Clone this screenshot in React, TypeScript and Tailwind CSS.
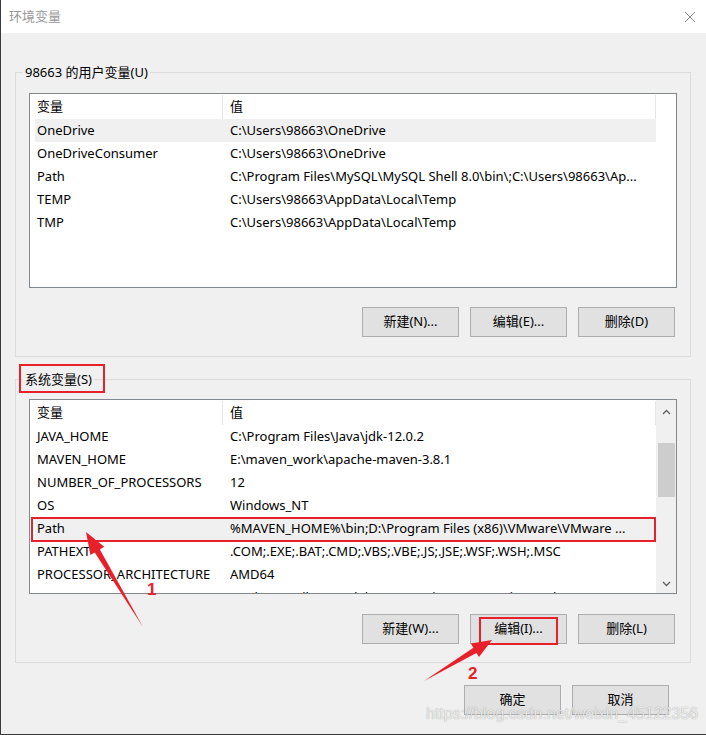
import React from 'react';

const font = { fontFamily: '"Noto Sans", "Noto Sans CJK SC", sans-serif' };

const userVars: [string, string][] = [
  ['OneDrive', 'C:\\Users\\98663\\OneDrive'],
  ['OneDriveConsumer', 'C:\\Users\\98663\\OneDrive'],
  ['Path', 'C:\\Program Files\\MySQL\\MySQL Shell 8.0\\bin\\;C:\\Users\\98663\\Ap...'],
  ['TEMP', 'C:\\Users\\98663\\AppData\\Local\\Temp'],
  ['TMP', 'C:\\Users\\98663\\AppData\\Local\\Temp'],
];

const sysVars: [string, string][] = [
  ['JAVA_HOME', 'C:\\Program Files\\Java\\jdk-12.0.2'],
  ['MAVEN_HOME', 'E:\\maven_work\\apache-maven-3.8.1'],
  ['NUMBER_OF_PROCESSORS', '12'],
  ['OS', 'Windows_NT'],
  ['Path', '%MAVEN_HOME%\\bin;D:\\Program Files (x86)\\VMware\\VMware ...'],
  ['PATHEXT', '.COM;.EXE;.BAT;.CMD;.VBS;.VBE;.JS;.JSE;.WSF;.WSH;.MSC'],
  ['PROCESSOR_ARCHITECTURE', 'AMD64'],
  ['PROCESSOR_IDENTIFIER', 'Intel64 Family 6 Model 158 Stepping 10, GenuineIntel'],
];

function Btn({ label, children }: { label: string; children?: React.ReactNode }) {
  return (
    <div className="relative w-[97px] h-[30px] bg-[#e1e1e1] border border-[#adadad] flex items-center justify-center text-[13px] text-black">
      {label}
      {children}
    </div>
  );
}

function VarList({ rows, selected, scroll }: { rows: [string, string][]; selected: number; scroll?: boolean }) {
  return (
    <div className="ml-[13px] w-[648px] h-[195px] border border-[#828790] bg-white flex overflow-hidden">
      <div className="flex-1 pl-[5px] pt-[1px] overflow-hidden">
        <div className="flex h-[24px] items-center text-[13px] text-black">
          <div className="w-[188px] pl-[2px] h-full flex items-center border-r border-[#e5e5e5]">变量</div>
          <div className="w-[433px] pl-[7px] h-full flex items-center border-r border-[#e5e5e5]">值</div>
        </div>
        {rows.map(([k, v], i) => (
          <div
            key={k}
            className={`flex w-[621px] h-[23px] items-center text-[13px] text-black whitespace-nowrap ${i === selected ? 'bg-[#f0f0f0]' : ''}`}
          >
            <div className="w-[188px] pl-[2px] overflow-hidden">{k}</div>
            <div className="w-[433px] pl-[7px] overflow-hidden">{v}</div>
          </div>
        ))}
      </div>
      {scroll && (
        <div className="w-[20px] bg-[#f0f0f0] flex flex-col items-center">
          <div className="h-[24px] flex items-center justify-center">
            <svg width="9" height="6" viewBox="0 0 9 6"><path d="M1 5 L4.5 1.5 L8 5" fill="none" stroke="#606060" strokeWidth="1.3" /></svg>
          </div>
          <div className="w-[17px] h-[54px] mt-[19px] bg-[#cdcdcd]" />
          <div className="flex-1" />
          <div className="h-[18px] flex items-center justify-center">
            <svg width="9" height="6" viewBox="0 0 9 6"><path d="M1 1 L4.5 4.5 L8 1" fill="none" stroke="#606060" strokeWidth="1.3" /></svg>
          </div>
        </div>
      )}
    </div>
  );
}

export default function App() {
  return (
    <div className="relative w-[706px] h-[735px] bg-[#f0f0f0] border-l border-b border-[#3a3a3a] overflow-hidden" style={font}>
      <div className="h-[33px] bg-white flex items-center justify-between pl-[8px] pr-[10px]">
        <span className="text-[13px] text-[#999999]">环境变量</span>
        <svg width="12" height="12" viewBox="0 0 12 12">
          <path d="M1 1 L11 11 M11 1 L1 11" stroke="#8a8a8a" strokeWidth="1" />
        </svg>
      </div>

      <div className="px-[14px]">
        <fieldset className="mt-[30px] w-[676px] border border-[#dcdcdc] pb-[19px]">
          <legend className="ml-[7px] px-[2px] leading-[18px] text-[13px] text-black">98663 的用户变量(U)</legend>
          <div className="mt-[12px]">
            <VarList rows={userVars} selected={0} />
          </div>
          <div className="mt-[19px] flex justify-end gap-[11px] pr-[15px]">
            <Btn label="新建(N)..." />
            <Btn label="编辑(E)..." />
            <Btn label="删除(D)" />
          </div>
        </fieldset>

        <fieldset className="mt-[13px] w-[676px] border border-[#dcdcdc] pb-[18px]">
          <legend className="ml-[7px] px-[2px] leading-[18px] text-[13px] text-black">系统变量(S)</legend>
          <div className="mt-[11px]">
            <VarList rows={sysVars} selected={4} scroll />
          </div>
          <div className="mt-[20px] flex justify-end gap-[11px] pr-[15px]">
            <Btn label="新建(W)..." />
            <Btn label="编辑(I)...">
              <div className="absolute left-[8px] top-[2px] w-[79px] h-[28px] border-2 border-[#e8202a]" />
            </Btn>
            <Btn label="删除(L)" />
          </div>
        </fieldset>

        <div className="mt-[22px] flex justify-end gap-[11px] pr-[23px]">
          <Btn label="确定" />
          <Btn label="取消" />
        </div>
      </div>

      {/* annotations drawn over the screenshot */}
      <svg className="absolute left-0 top-0 pointer-events-none" width="706" height="735" viewBox="0 0 706 735">
        <rect x="19" y="365" width="84" height="27" fill="none" stroke="#e8202a" strokeWidth="2" />
        <rect x="31" y="518" width="623" height="23" fill="none" stroke="#e8202a" strokeWidth="2" />
        <polygon points="85,532 103.2,546.8 98.9,549.4 142,627 93.7,552.4 89.4,555" fill="#e8202a" />
        <polygon points="491,640 478,657.1 475.4,652.9 423,681 472.4,647.7 469.8,643.5" fill="#e8202a" />
      </svg>
      <span className="absolute left-[146px] top-[581px] text-[17px] font-bold text-[#e8202a] leading-none" style={{ fontFamily: '"Liberation Sans", sans-serif' }}>1</span>
      <span className="absolute left-[467px] top-[665px] text-[17px] font-bold text-[#e8202a] leading-none" style={{ fontFamily: '"Liberation Sans", sans-serif' }}>2</span>
      <span
        className="absolute left-[425px] top-[706px] text-[16px] text-white/80 leading-none [text-shadow:0_0_1px_rgba(0,0,0,0.45)]"
        style={{ fontFamily: '"Liberation Sans", sans-serif' }}
      >
        https://blog.csdn.net/weixin_45122356
      </span>
    </div>
  );
}
